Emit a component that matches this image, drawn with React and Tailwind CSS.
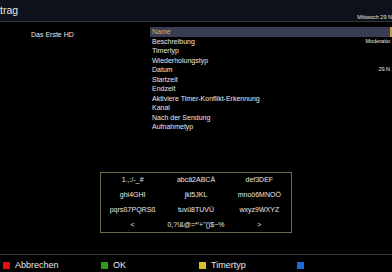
export default function App() {
  const items = [
    ["Name", ""],
    ["Beschreibung", "Moderatio"],
    ["Timertyp", ""],
    ["Wiederholungstyp", ""],
    ["Datum", "29.N"],
    ["Startzeit", ""],
    ["Endzeit", ""],
    ["Aktiviere Timer-Konflikt-Erkennung", ""],
    ["Kanal", ""],
    ["Nach der Sendung", ""],
    ["Aufnahmetyp", ""],
  ];

  const keys = [
    "1.,:/-_#", "abcä2ABCÄ", "def3DEF",
    "ghi4GHI", "jkl5JKL", "mnoö6MNOÖ",
    "pqrsß7PQRSß", "tuvü8TUVÜ", "wxyz9WXYZ",
    "<", "0,?!&@=*'+\"()$~%", ">",
  ];

  const buttons = [
    ["bg-[#e01010]", "Abbrechen"],
    ["bg-[#2a9a18]", "OK"],
    ["bg-[#d8c020]", "Timertyp"],
    ["bg-[#1a6ad8]", ""],
  ];

  return (
    <div className="w-[392px] h-[272px] bg-black flex flex-col overflow-hidden font-['Liberation_Sans',Arial,sans-serif] text-[#e8e8e8]">
      {/* header */}
      <div className="h-[21px] bg-[#0e1119] flex justify-between">
        <div className="text-[10.5px] leading-none pt-[5px]">trag</div>
        <div className="text-[5.5px] leading-none self-end pb-[1px] whitespace-nowrap">Mittwoch 29 N</div>
      </div>
      <div className="h-px bg-[#34363e]" />

      {/* content */}
      <div className="flex pt-[5px]">
        <div className="w-[150px] pl-[31px] pt-[4px] text-[7px] leading-none">Das Erste HD</div>
        <div className="flex-1 flex flex-col">
          {items.map(([label, value], i) => (
            <div
              key={label}
              className={`h-[9.5px] flex items-center justify-between text-[7px] leading-none ${
                i === 0 ? "bg-[#3a3d52] text-[#c9b56a]" : ""
              }`}
            >
              <span className="pl-[2px] whitespace-nowrap">{label}</span>
              {i === 0 ? (
                <span className="w-[2px] h-full bg-[#b8a050]" />
              ) : (
                <span className="text-[5.5px] whitespace-nowrap pr-[2px]">{value}</span>
              )}
            </div>
          ))}
        </div>
      </div>

      {/* keypad */}
      <div className="flex justify-center mt-[40px]">
        <div className="w-[192px] h-[61px] border border-[#6a6944] grid grid-cols-3 content-center text-[7px] leading-none">
          {keys.map((k) => (
            <div key={k} className="h-[15px] flex items-center justify-center whitespace-nowrap">
              {k}
            </div>
          ))}
        </div>
      </div>

      {/* footer */}
      <div className="mt-auto h-px bg-[#3a3a3a] mb-[3px]" />
      <div className="h-[14px] flex items-center">
        {buttons.map(([color, label]) => (
          <div key={color} className="w-[110px] flex items-center pl-[3px] gap-[5px] text-[9px] leading-none">
            <span className={`w-[7px] h-[7px] ${color}`} />
            <span>{label}</span>
          </div>
        ))}
      </div>
    </div>
  );
}
